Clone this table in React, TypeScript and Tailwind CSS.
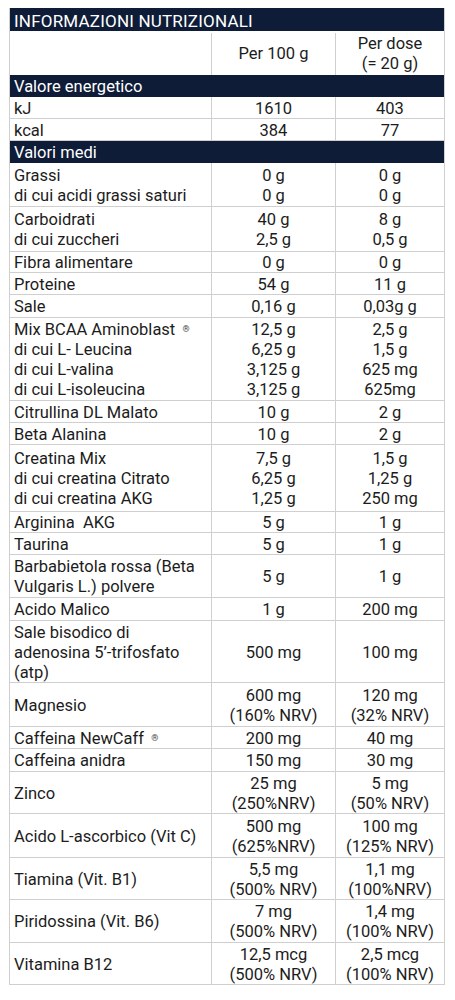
type Row = {
  label: React.ReactNode;
  a: React.ReactNode;
  b: React.ReactNode;
  h: string;
};

const Reg = () => (
  <sup className="text-[9px] relative -top-[3px] ml-[3px] text-[#444]">®</sup>
);

const rowsTop: Row[] = [
  { label: "kJ", a: "1610", b: "403", h: "h-[22px]" },
  { label: "kcal", a: "384", b: "77", h: "h-[22px]" },
];

const rows: Row[] = [
  {
    label: <>Grassi<br />di cui acidi grassi saturi</>,
    a: <>0 g<br />0 g</>,
    b: <>0 g<br />0 g</>,
    h: "h-[44px]",
  },
  {
    label: <>Carboidrati<br />di cui zuccheri</>,
    a: <>40 g<br />2,5 g</>,
    b: <>8 g<br />0,5 g</>,
    h: "h-[45px]",
  },
  { label: "Fibra alimentare", a: "0 g", b: "0 g", h: "h-[21px]" },
  { label: "Proteine", a: "54 g", b: "11 g", h: "h-[22px]" },
  { label: "Sale", a: "0,16 g", b: "0,03g g", h: "h-[23px]" },
  {
    label: (
      <>
        Mix BCAA Aminoblast <Reg />
        <br />di cui L- Leucina<br />di cui L-valina<br />di cui L-isoleucina
      </>
    ),
    a: <>12,5 g<br />6,25 g<br />3,125 g<br />3,125 g</>,
    b: <>2,5 g<br />1,5 g<br />625 mg<br />625mg</>,
    h: "h-[83px]",
  },
  { label: "Citrullina DL Malato", a: "10 g", b: "2 g", h: "h-[22px]" },
  { label: "Beta Alanina", a: "10 g", b: "2 g", h: "h-[22px]" },
  {
    label: <>Creatina Mix<br />di cui creatina Citrato<br />di cui creatina AKG</>,
    a: <>7,5 g<br />6,25 g<br />1,25 g</>,
    b: <>1,5 g<br />1,25 g<br />250 mg</>,
    h: "h-[67px]",
  },
  { label: "Arginina\u00a0 AKG", a: "5 g", b: "1 g", h: "h-[21px]" },
  { label: "Taurina", a: "5 g", b: "1 g", h: "h-[22px]" },
  {
    label: <>Barbabietola rossa (Beta<br />Vulgaris L.) polvere</>,
    a: "5 g",
    b: "1 g",
    h: "h-[43px]",
  },
  { label: "Acido Malico", a: "1 g", b: "200 mg", h: "h-[23px]" },
  {
    label: <>Sale bisodico di<br />adenosina 5’-trifosfato<br />(atp)</>,
    a: "500 mg",
    b: "100 mg",
    h: "h-[62px]",
  },
  {
    label: "Magnesio",
    a: <>600 mg<br />(160% NRV)</>,
    b: <>120 mg<br />(32% NRV)</>,
    h: "h-[44px]",
  },
  {
    label: <>Caffeina NewCaff <Reg /></>,
    a: "200 mg",
    b: "40 mg",
    h: "h-[22px]",
  },
  { label: "Caffeina anidra", a: "150 mg", b: "30 mg", h: "h-[23px]" },
  {
    label: "Zinco",
    a: <>25 mg<br />(250%NRV)</>,
    b: <>5 mg<br />(50% NRV)</>,
    h: "h-[42px]",
  },
  {
    label: "Acido L-ascorbico (Vit C)",
    a: <>500 mg<br />(625%NRV)</>,
    b: <>100 mg<br />(125% NRV)</>,
    h: "h-[44px]",
  },
  {
    label: "Tiamina (Vit. B1)",
    a: <>5,5 mg<br />(500% NRV)</>,
    b: <>1,1 mg<br />(100%NRV)</>,
    h: "h-[42px]",
  },
  {
    label: "Piridossina (Vit. B6)",
    a: <>7 mg<br />(500% NRV)</>,
    b: <>1,4 mg<br />(100% NRV)</>,
    h: "h-[43px]",
  },
  {
    label: "Vitamina B12",
    a: <>12,5 mcg<br />(500% NRV)</>,
    b: <>2,5 mcg<br />(100% NRV)</>,
    h: "h-[42px]",
  },
];

function DataRow({ row }: { row: Row }) {
  return (
    <div className={`${row.h} flex border-b border-[#cfcfcf]`}>
      <div className="w-[201px] pl-[4px] pt-[2px] flex items-center">
        <div>{row.label}</div>
      </div>
      <div className="w-[124px] pt-[2px] border-l border-[#cfcfcf] flex items-center justify-center text-center">
        <div>{row.a}</div>
      </div>
      <div className="flex-1 pt-[2px] border-l border-[#cfcfcf] flex items-center justify-center text-center">
        <div>{row.b}</div>
      </div>
    </div>
  );
}

function SectionBar({ title, h }: { title: string; h: string }) {
  return (
    <div className={`${h} bg-[#0e1c37] text-white pl-[4px] pt-[2px] flex items-center`}>
      {title}
    </div>
  );
}

export default function App() {
  return (
    <div className="bg-white w-[455px] h-[1000px] pt-[8px] pl-[9px]">
      <div
        className="w-[436px] text-[16.5px] leading-[20px] text-[#1c1c1c] border-l border-r border-[#cfcfcf]"
        style={{ fontFamily: "Roboto, 'Liberation Sans', sans-serif" }}
      >
        <div className="h-[23px] bg-[#0e1c37] text-white pl-[4px] pt-[2px] flex items-center text-[17px] tracking-[0.2px]">
          INFORMAZIONI NUTRIZIONALI
        </div>
        <div className="h-[44px] pt-[2px] flex">
          <div className="w-[201px]"></div>
          <div className="w-[124px] border-l border-[#cfcfcf] flex items-center justify-center">
            Per 100 g
          </div>
          <div className="flex-1 border-l border-[#cfcfcf] flex items-center justify-center text-center">
            <div>
              Per dose
              <br />
              (= 20 g)
            </div>
          </div>
        </div>
        <SectionBar title="Valore energetico" h="h-[22px]" />
        {rowsTop.map((r, i) => (
          <DataRow key={i} row={r} />
        ))}
        <SectionBar title="Valori medi" h="h-[22px]" />
        {rows.map((r, i) => (
          <DataRow key={i} row={r} />
        ))}
      </div>
    </div>
  );
}
